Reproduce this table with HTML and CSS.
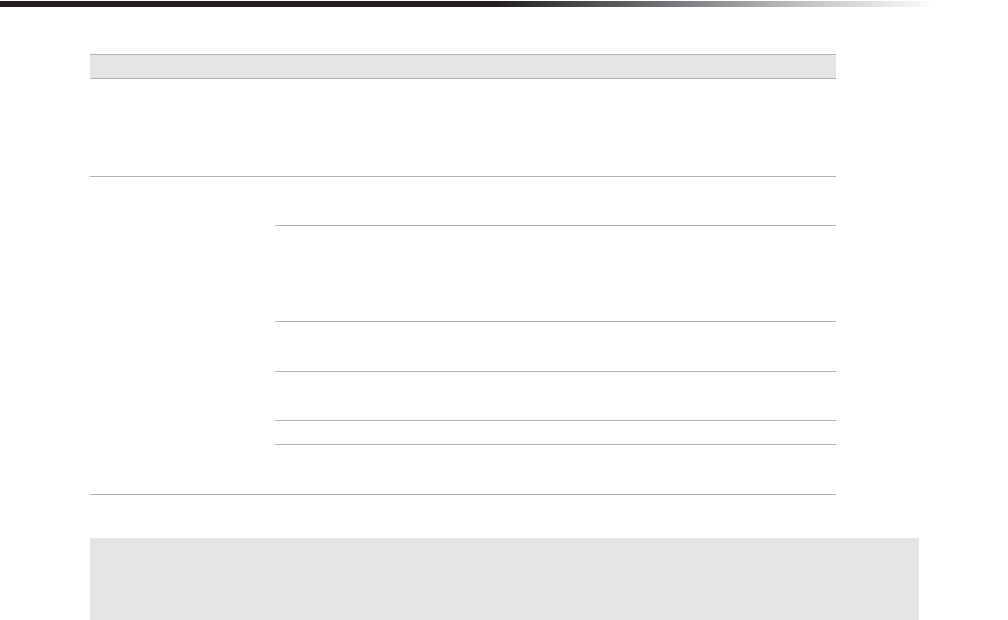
FILE: index.html
```html
<!DOCTYPE html>
<html lang="en">
<head>
    <meta charset="UTF-8">
    <meta name="viewport" content="width=device-width, initial-scale=1.0">
    <title>Table</title>
    <link rel="stylesheet" href="styles.css">
</head>
<body>
    <div class="topBar"></div>
    <main class="content">
        <div class="grid">
            <div class="gridHead"></div>
            <div class="gridRow rowTall"></div>
            <div class="gridGroup">
                <div class="groupLabel"></div>
                <div class="groupRows">
                    <div class="subRow h48"></div>
                    <div class="subRow h95"></div>
                    <div class="subRow h49"></div>
                    <div class="subRow h48"></div>
                    <div class="subRow h23"></div>
                    <div class="subRow h49 last"></div>
                </div>
            </div>
        </div>
        <div class="note"></div>
    </main>
</body>
</html>
```

FILE: styles.css
```css
*{
    box-sizing: border-box;
    margin: 0;
    padding: 0;
}
html{
    background: #ffffff;
}
body{
    font-family: 'Liberation Sans', Arial, sans-serif;
    overflow: hidden;
}
.topBar{
    width: 937px;
    height: 6px;
    margin-top: 1px;
    background: linear-gradient(to right, #231f20 0%, #231f20 53%, #6d6e71 70%, #bcbec0 85%, #ffffff 100%);
}
.content{
    padding: 47px 0 0 90px;
}
.grid{
    width: 746px;
}
.gridHead{
    height: 25px;
    background: #e5e5e5;
    border-top: 1px solid #b3b3b3;
    border-bottom: 1px solid #b3b3b3;
}
.gridRow{
    border-bottom: 1px solid #b3b3b3;
}
.rowTall{
    height: 98px;
}
.gridGroup{
    display: flex;
    border-bottom: 1px solid #b3b3b3;
}
.groupLabel{
    width: 185px;
    flex-shrink: 0;
}
.groupRows{
    flex: 1;
}
.subRow{
    border-bottom: 1px solid #b3b3b3;
}
.subRow.last{
    border-bottom: none;
}
.h23{ height: 24px; }
.h48{ height: 49px; }
.h49{ height: 50px; }
.h95{ height: 96px; }
.subRow.last.h49{ height: 49px; }
.note{
    width: 829px;
    height: 90px;
    margin-top: 43px;
    background: #e5e5e5;
}
```
